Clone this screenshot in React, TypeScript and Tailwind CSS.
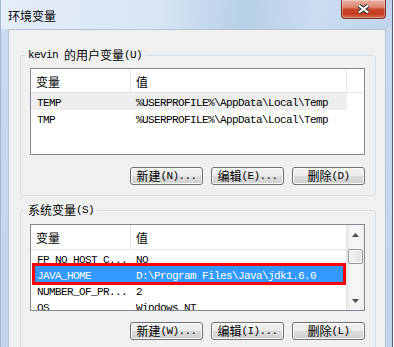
import React from "react";

function Txt({ s }: { s: string }) {
  const parts = s.split(/([\x00-\x7F]+)/).filter((p) => p.length > 0);
  return (
    <>
      {parts.map((p, i) =>
        /^[\x00-\x7F]+$/.test(p) ? (
          <span key={i} className="font-['Liberation_Mono',monospace] text-[11px] tracking-[-0.6px]">
            {p}
          </span>
        ) : (
          <span key={i} className="font-['Noto_Sans_CJK_SC',sans-serif] text-[12px]">
            {p}
          </span>
        )
      )}
    </>
  );
}

function Btn({ label }: { label: string }) {
  return (
    <button
      type="button"
      className="w-[73px] h-[18px] rounded-[3px] border border-[#707070] bg-[linear-gradient(to_bottom,#f2f2f2_0%,#ebebeb_50%,#dddddd_51%,#cfcfcf_100%)] shadow-[inset_0_0_0_1px_#fbfbfb] flex items-center justify-center leading-[14px] whitespace-pre text-black"
    >
      <Txt s={label} />
    </button>
  );
}

function GroupLabel({ s }: { s: string }) {
  return (
    <div className="-mt-[8px] -ml-[5px] w-fit h-[14px] px-[3px] bg-[#f0f0f0] flex items-center leading-[14px] whitespace-pre">
      <Txt s={s} />
    </div>
  );
}

function Arrow({ up }: { up: boolean }) {
  return (
    <svg width="7" height="4" viewBox="0 0 7 4">
      <path d={up ? "M3.5 0 L7 4 L0 4 Z" : "M0 0 L7 0 L3.5 4 Z"} fill="#4d4d4d" />
    </svg>
  );
}

export default function App() {
  return (
    <div className="w-[394px] h-[347px] overflow-hidden bg-white text-black">
      <div className="w-[393px] h-[390px] flex flex-col border-l border-r border-l-[#a3b6cc] border-r-[#4f6178] bg-[linear-gradient(to_bottom,#c9dbef,#bfd3eb)]">
        {/* Title bar */}
        <div className="h-[29px] shrink-0 flex bg-[linear-gradient(95deg,#e4edf8_0%,#d8e5f4_40%,#b8cfe9_62%,#cbdcf0_80%,#c0d4ec_100%)]">
          <div className="pl-[7px] self-center pt-[1px] leading-[14px] whitespace-pre">
            <span className="font-['Noto_Sans_CJK_SC',sans-serif] text-[12px]">环境变量</span>
          </div>
          <div className="ml-auto mr-[6px] w-[45px] h-[19px] rounded-b-[4px] border border-t-0 border-[#7a3326] bg-[linear-gradient(to_bottom,#eab1a3_0%,#dc8670_40%,#c8462a_52%,#c23c20_75%,#d76a4c_100%)] shadow-[inset_0_0_0_1px_rgba(255,255,255,0.3)] flex items-center justify-center">
            <svg width="13" height="10" viewBox="0 0 13 10">
              <path d="M2 1.5 L11 8.5 M11 1.5 L2 8.5" stroke="#3a3a3a" strokeWidth="4.2" />
              <path d="M2 1.5 L11 8.5 M11 1.5 L2 8.5" stroke="#ffffff" strokeWidth="2.2" />
            </svg>
          </div>
        </div>

        {/* Client panel */}
        <div className="ml-[7px] mr-[6px] flex-1 border border-[#b4c4d8] bg-[#f0f0f0] flex flex-col">
          {/* User variables */}
          <div className="mt-[25px] ml-[11px] w-[356px] border border-[#d5dfe5] rounded-[3px] pl-[9px] pr-[10px] pb-[10px]">
            <GroupLabel s="kevin 的用户变量(U)" />
            <div className="mt-[6px] h-[87px] border border-[#828790] bg-white overflow-hidden flex flex-col">
              <div className="h-[24px] shrink-0 flex border-b border-[#e5e5e5] leading-[14px]">
                <div className="w-[100px] border-r border-[#e5e5e5] pl-[5px] pt-[2px] flex items-center">
                  <Txt s="变量" />
                </div>
                <div className="w-[216px] border-r border-[#e5e5e5] pl-[5px] pt-[2px] flex items-center">
                  <Txt s="值" />
                </div>
              </div>
              <div className="w-[316px] h-[17px] flex items-center bg-[#eeeeee] leading-[14px] whitespace-pre">
                <div className="w-[100px] pl-[6px]">
                  <Txt s="TEMP" />
                </div>
                <div className="pl-[5px]">
                  <Txt s="%USERPROFILE%\AppData\Local\Temp" />
                </div>
              </div>
              <div className="w-[316px] h-[17px] flex items-center leading-[14px] whitespace-pre">
                <div className="w-[100px] pl-[6px]">
                  <Txt s="TMP" />
                </div>
                <div className="pl-[5px]">
                  <Txt s="%USERPROFILE%\AppData\Local\Temp" />
                </div>
              </div>
            </div>
            <div className="mt-[12px] flex justify-end gap-[8px]">
              <Btn label="新建(N)..." />
              <Btn label="编辑(E)..." />
              <Btn label="删除(D)" />
            </div>
          </div>

          {/* System variables */}
          <div className="mt-[14px] ml-[11px] w-[356px] border border-[#d5dfe5] rounded-[3px] pl-[9px] pr-[10px] pb-[10px]">
            <GroupLabel s="系统变量(S)" />
            <div className="mt-[7px] h-[87px] border border-[#828790] bg-white overflow-hidden flex">
              <div className="flex-1 min-w-0 flex flex-col">
                <div className="h-[25px] shrink-0 flex border-b border-[#e5e5e5] leading-[14px]">
                  <div className="w-[100px] border-r border-[#e5e5e5] pl-[5px] pt-[2px] flex items-center">
                    <Txt s="变量" />
                  </div>
                  <div className="flex-1 pl-[5px] pt-[2px] flex items-center">
                    <Txt s="值" />
                  </div>
                </div>
                <div className="h-[16px] shrink-0 flex items-center leading-[14px] whitespace-pre">
                  <div className="w-[100px] pl-[6px] overflow-hidden">
                    <Txt s="FP_NO_HOST_C..." />
                  </div>
                  <div className="pl-[5px]">
                    <Txt s="NO" />
                  </div>
                </div>
                <div className="h-[16px] shrink-0 ml-[4px] mr-[3px] pl-[2px] flex items-center bg-[#3399ff] text-white outline-3 outline-[#ff0000] leading-[14px] whitespace-pre">
                  <div className="w-[94px]">
                    <Txt s="JAVA_HOME" />
                  </div>
                  <div className="pl-[5px]">
                    <Txt s="D:\Program Files\Java\jdk1.6.0" />
                  </div>
                </div>
                <div className="h-[16px] shrink-0 flex items-center leading-[14px] whitespace-pre">
                  <div className="w-[100px] pl-[6px] overflow-hidden">
                    <Txt s="NUMBER_OF_PR..." />
                  </div>
                  <div className="pl-[5px]">
                    <Txt s="2" />
                  </div>
                </div>
                <div className="h-[16px] shrink-0 flex items-center leading-[14px] whitespace-pre">
                  <div className="w-[100px] pl-[6px]">
                    <Txt s="OS" />
                  </div>
                  <div className="pl-[5px]">
                    <Txt s="Windows_NT" />
                  </div>
                </div>
              </div>
              {/* Scrollbar */}
              <div className="w-[18px] shrink-0 border-l border-[#e3e3e3] flex flex-col items-center bg-[linear-gradient(to_right,#e9e9e9,#f5f5f5_25%,#f5f5f5_75%,#ececec)]">
                <div className="h-[20px] flex items-center justify-center">
                  <Arrow up />
                </div>
                <div className="mt-[4px] w-[15px] h-[15px] rounded-[2px] border border-[#979797] bg-[linear-gradient(to_right,#f4f4f4,#e2e2e2)] shadow-[inset_0_0_0_1px_#fafafa]" />
                <div className="mt-auto h-[19px] flex items-center justify-center">
                  <Arrow up={false} />
                </div>
              </div>
            </div>
            <div className="mt-[11px] flex justify-end gap-[8px]">
              <Btn label="新建(W)..." />
              <Btn label="编辑(I)..." />
              <Btn label="删除(L)" />
            </div>
          </div>
        </div>
      </div>
    </div>
  );
}
